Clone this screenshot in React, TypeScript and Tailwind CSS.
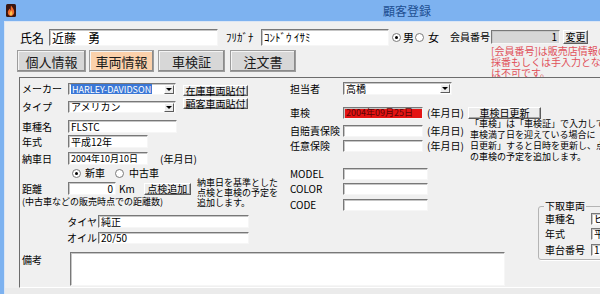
import React from "react";
import { twMerge } from "tailwind-merge";

type P = { className?: string; children?: React.ReactNode };

function Box({ className, children }: P) {
  return (
    <div
      className={twMerge(
        "flex shrink-0 items-center overflow-hidden whitespace-nowrap bg-white pl-[2px] text-[10px] leading-none text-black border border-t-[#787878] border-l-[#787878] border-b-[#f6f6f6] border-r-[#f6f6f6] shadow-[inset_1px_1px_0_#c6c6c6]",
        className
      )}
    >
      {children}
    </div>
  );
}

function Btn({ className, children }: P) {
  return (
    <div
      className={twMerge(
        "flex shrink-0 items-center justify-center whitespace-nowrap bg-[#ececec] text-[10px] leading-none text-black border border-t-white border-l-white border-b-[#5c5c5c] border-r-[#5c5c5c] shadow-[inset_-1px_-1px_0_#a6a6a6]",
        className
      )}
    >
      {children}
    </div>
  );
}

function Select({ className, children }: P) {
  return (
    <Box className={twMerge("pr-[1px]", className)}>
      <div className="flex-1 overflow-hidden">{children}</div>
      <div className="flex h-[9px] w-[10px] items-center justify-center bg-[#ececec] border border-t-white border-l-white border-b-[#5c5c5c] border-r-[#5c5c5c]">
        <svg width="6" height="3" viewBox="0 0 6 3">
          <path d="M0 0h6L3 3z" fill="#000" />
        </svg>
      </div>
    </Box>
  );
}

function Radio({ on }: { on?: boolean }) {
  return (
    <span className="flex h-[9px] w-[9px] shrink-0 items-center justify-center rounded-full border border-[#7a7a7a] bg-white">
      {on && <span className="h-[3px] w-[3px] rounded-full bg-black" />}
    </span>
  );
}

function Label({ className, children }: P) {
  return <div className={twMerge("shrink-0 whitespace-nowrap text-[10px] leading-none text-black", className)}>{children}</div>;
}

function Tab({ on, children }: { on?: boolean; children: React.ReactNode }) {
  return (
    <div
      className={twMerge(
        "flex h-[22px] items-center justify-center text-[13px] leading-none text-[#1a1a1a] border border-[#9c9c9c] shadow-[inset_-1px_-1px_0_#8a8a8a,inset_1px_1px_0_#f4f4f4]",
        on ? "bg-[#fbd1ab]" : "bg-[#d7d7d7]"
      )}
    >
      {children}
    </div>
  );
}

function AppIcon() {
  return (
    <svg width="10" height="13" viewBox="0 0 10 13">
      <rect width="10" height="13" rx="1.5" fill="#3a1610" />
      <path d="M5 1.5C6.8 4 8.5 6 8.2 8.6 7.9 11 6.4 12 5 12S2 11 1.8 8.8C1.6 7 3 6.2 3.4 4.6 4 5.6 4.3 6.4 4.6 6.6 4.8 5 4.6 3.2 5 1.5z" fill="#ef6a2c" />
      <path d="M5 6.5c1 1.2 1.6 2.2 1.4 3.3C6.2 11 5.6 11.4 5 11.4S3.7 11 3.6 10c0-1 .8-1.6 1.4-3.5z" fill="#f8c24a" />
    </svg>
  );
}

export default function App() {
  return (
    <div className="flex h-[294px] w-[600px] flex-col overflow-hidden bg-[#7db2f0] font-['Noto_Sans_CJK_JP',sans-serif]">
      {/* title bar */}
      <div className="flex h-[21px] shrink-0 items-center">
        <div className="ml-[6px] flex">
          <AppIcon />
        </div>
        <div className="ml-[367px] text-[12px] leading-none text-[#1d4f92]">顧客登録</div>
      </div>

      <div className="flex min-h-0 flex-1 pl-[4px]">
        <div className="flex min-w-0 flex-1 flex-col overflow-hidden border-l border-t border-[#dbe6f5] bg-[#f0f0f0]">
          {/* header */}
          <div className="flex h-[55px] shrink-0">
            <div className="flex w-[445px] shrink-0 flex-col pl-[12px]">
              <div className="mt-[7px] flex h-[17px] items-center">
                <Label className="w-[32px] pl-[3px] text-[12px]">氏名</Label>
                <Box className="h-[17px] w-[169px] text-[12px]">近藤　勇</Box>
                <Label className="ml-[8px] w-[35px] text-[11px]">ﾌﾘｶﾞﾅ</Label>
                <Box className="h-[17px] w-[128px] text-[11px]">ｺﾝﾄﾞｳ ｲｻﾐ</Box>
                <div className="ml-[3px] flex items-center">
                  <Radio on />
                  <Label className="ml-[2px] text-[11px]">男</Label>
                  <div className="ml-[1px] flex">
                    <Radio />
                  </div>
                  <Label className="ml-[4px] text-[11px]">女</Label>
                </div>
              </div>
              <div className="mt-[4px] flex items-center">
                <div className="w-[69px]">
                  <Tab>個人情報</Tab>
                </div>
                <div className="ml-[3px] w-[65px]">
                  <Tab on>車両情報</Tab>
                </div>
                <div className="ml-[4px] w-[67px]">
                  <Tab>車検証</Tab>
                </div>
                <div className="ml-[5px] w-[66px]">
                  <Tab>注文書</Tab>
                </div>
              </div>
            </div>
            <div className="flex flex-col">
              <div className="mt-[8px] flex h-[14px] items-center">
                <Label className="w-[41px]">会員番号</Label>
                <Box className="h-[14px] w-[69px] justify-end bg-[#d6d6d6] pr-[2px]">1</Box>
                <Btn className="ml-[3px] h-[14px] w-[25px]">変更</Btn>
              </div>
              <div className="ml-[41px] mt-[1px] whitespace-nowrap text-[10px] leading-[11px] text-[#e0505a]">
                <div>[会員番号]は販売店情報の</div>
                <div>採番もしくは手入力となりま</div>
                <div>は不可です。</div>
              </div>
            </div>
          </div>

          {/* panel */}
          <div className="ml-[14px] flex h-[211px] shrink-0 border-l border-t border-b border-l-[#6c6c6c] border-t-[#6c6c6c] border-b-white">
            <div className="flex w-[518px] shrink-0 flex-col">
              <div className="flex h-[166px]">
                {/* left column */}
                <div className="flex w-[265px] shrink-0 flex-col">
                  <div className="mt-[5px] flex h-[13px] items-start">
                    <Label className="w-[48px] pl-[2px] leading-[12px]">メーカー</Label>
                    <Select className="h-[12px] w-[108px]">
                      <span className="bg-[#3a77d6] px-[1px] text-[9px] text-white">HARLEY-DAVIDSON</span>
                    </Select>
                    <Btn className="ml-[7px] mt-[2px] h-[11px] w-[65px]">在庫車両貼付</Btn>
                  </div>
                  <div className="mt-[2px] flex h-[15px] items-start">
                    <div className="mt-[3px] flex items-center">
                      <Label className="w-[48px] pl-[2px]">タイプ</Label>
                      <Select className="h-[12px] w-[108px]">アメリカン</Select>
                    </div>
                    <Btn className="ml-[7px] h-[11px] w-[65px]">顧客車両貼付</Btn>
                  </div>
                  <div className="mt-[7px] flex h-[13px] items-center">
                    <Label className="w-[48px] pl-[2px]">車種名</Label>
                    <Box className="h-[13px] w-[109px]">FLSTC</Box>
                  </div>
                  <div className="mt-[2px] flex h-[13px] items-center">
                    <Label className="w-[48px] pl-[2px]">年式</Label>
                    <Box className="h-[13px] w-[80px]">平成12年</Box>
                  </div>
                  <div className="mt-[4px] flex h-[13px] items-center">
                    <Label className="w-[48px] pl-[2px]">納車日</Label>
                    <Box className="h-[13px] w-[80px] text-[9px]">2004年10月10日</Box>
                    <Label className="ml-[12px]">(年月日)</Label>
                  </div>
                  <div className="mt-[2px] flex h-[12px] items-center pl-[52px]">
                    <Radio on />
                    <Label className="ml-[4px]">新車</Label>
                    <div className="ml-[10px] flex">
                      <Radio />
                    </div>
                    <Label className="ml-[5px]">中古車</Label>
                  </div>
                  <div className="mt-[3px] flex items-start">
                    <div className="flex w-[175px] shrink-0 flex-col">
                      <div className="flex h-[13px] items-center">
                        <Label className="w-[48px] pl-[2px]">距離</Label>
                        <Box className="h-[13px] w-[48px] justify-end pr-[2px]">0</Box>
                        <Label className="ml-[3px]">Km</Label>
                        <Btn className="ml-[9px] h-[12px] w-[47px]">点検追加</Btn>
                      </div>
                      <div className="mt-[1px] whitespace-nowrap pl-[2px] text-[9px] leading-[12px]">(中古車などの販売時点での距離数)</div>
                    </div>
                    <div className="ml-[2px] mt-[-4px] whitespace-nowrap text-[9px] leading-[10px]">
                      <div>納車日を基準とした</div>
                      <div>点検と車検の予定を</div>
                      <div>追加します。</div>
                    </div>
                  </div>
                  <div className="mt-[7px] flex h-[13px] items-center">
                    <Label className="w-[78px] pr-[1px] text-right">タイヤ</Label>
                    <Box className="h-[13px] w-[151px]">純正</Box>
                  </div>
                  <div className="mt-[4px] flex h-[12px] items-center">
                    <Label className="w-[78px] pr-[1px] text-right">オイル</Label>
                    <Box className="h-[12px] w-[151px]">20/50</Box>
                  </div>
                </div>

                {/* right column */}
                <div className="flex flex-col">
                  <div className="mt-[4px] flex h-[13px] items-center">
                    <Label className="w-[58px] pl-[5px]">担当者</Label>
                    <Select className="h-[13px] w-[109px]">高橋</Select>
                  </div>
                  <div className="mt-[12px] flex h-[12px] items-center">
                    <Label className="w-[58px] pl-[5px]">車検</Label>
                    <Box className="h-[12px] w-[80px] bg-[#e41414] text-[9px] text-[#5c0606]">2004年09月25日</Box>
                    <Label className="ml-[4px] w-[41px]">(年月日)</Label>
                    <Btn className="h-[12px] w-[73px]">車検日更新</Btn>
                  </div>
                  <div className="mt-[6px] flex items-start">
                    <div className="flex w-[185px] shrink-0 flex-col">
                      <div className="flex h-[12px] items-center">
                        <Label className="w-[58px] pl-[5px]">自賠責保険</Label>
                        <Box className="h-[12px] w-[80px]" />
                        <Label className="ml-[4px]">(年月日)</Label>
                      </div>
                      <div className="mt-[3px] flex h-[12px] items-center">
                        <Label className="w-[58px] pl-[5px]">任意保険</Label>
                        <Box className="h-[12px] w-[80px]" />
                        <Label className="ml-[4px]">(年月日)</Label>
                      </div>
                    </div>
                    <div className="mt-[-7px] whitespace-nowrap text-[9px] leading-[11px]">
                      <div>「車検」は「車検証」で入力してください。</div>
                      <div>車検満了日を迎えている場合に「車検</div>
                      <div>日更新」すると日時を更新し、点検と次回</div>
                      <div>の車検の予定を追加します。</div>
                    </div>
                  </div>
                  <div className="mt-[6px] flex h-[12px] items-center">
                    <Label className="w-[58px] pl-[5px]">MODEL</Label>
                    <Box className="h-[12px] w-[85px]" />
                  </div>
                  <div className="mt-[3px] flex h-[12px] items-center">
                    <Label className="w-[58px] pl-[5px]">COLOR</Label>
                    <Box className="h-[12px] w-[85px]" />
                  </div>
                  <div className="mt-[4px] flex h-[12px] items-center">
                    <Label className="w-[58px] pl-[5px]">CODE</Label>
                    <Box className="h-[12px] w-[85px]" />
                  </div>
                </div>
              </div>

              <div className="mt-[8px] flex items-start">
                <Label className="mt-[2px] w-[50px] pl-[2px] leading-[12px]">備考</Label>
                <Box className="h-[34px] w-[435px]" />
              </div>
            </div>

            {/* trade-in group */}
            <div className="flex flex-col">
              <fieldset className="mt-[122px] h-[60px] w-[80px] rounded-[3px] border border-[#b4b4b4] shadow-[1px_1px_0_#ffffff]">
                <legend className="ml-[5px] px-[1px] text-[10px] leading-[12px]">下取車両</legend>
                <div className="mt-[1px] flex h-[12px] items-center">
                  <Label className="w-[52px] pl-[6px]">車種名</Label>
                  <Box className="h-[12px] w-[60px]">ビッグスクーター</Box>
                </div>
                <div className="mt-[3px] flex h-[12px] items-center">
                  <Label className="w-[52px] pl-[6px]">年式</Label>
                  <Box className="h-[12px] w-[60px]">平成8年</Box>
                </div>
                <div className="mt-[4px] flex h-[12px] items-center">
                  <Label className="w-[52px] pl-[6px]">車台番号</Label>
                  <Box className="h-[12px] w-[60px]">1HD1BJL</Box>
                </div>
              </fieldset>
            </div>
          </div>
          <div className="flex-1 bg-[#ebebeb]" />
        </div>
      </div>
    </div>
  );
}
